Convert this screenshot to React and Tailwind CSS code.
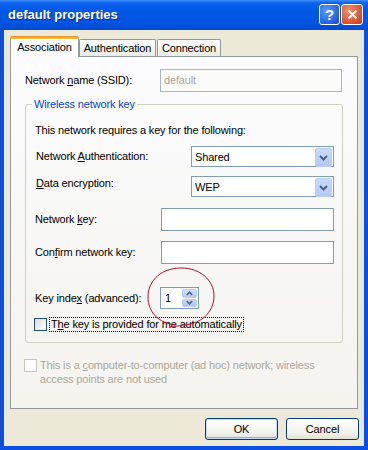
import React from "react";

const U = ({ children }) => (
  <span className="underline underline-offset-[1px] decoration-[1px]">{children}</span>
);

function DropBtn() {
  return (
    <div className="w-[17px] h-[19px] my-[1px] mr-[1px] rounded-[2px] border border-[#b8cdf8] bg-[linear-gradient(to_bottom,#c9dafc,#b2c8f7)] flex items-center justify-center">
      <svg width="9" height="6" viewBox="0 0 9 6">
        <path d="M1 1 L4.5 4.5 L8 1" fill="none" stroke="#4d6185" strokeWidth="2" />
      </svg>
    </div>
  );
}

function Select({ value }) {
  return (
    <div className="w-[143px] h-[21px] border border-[#7f9db9] bg-white flex items-stretch">
      <div className="flex-1 flex items-center pl-[3px] pt-[1px]">{value}</div>
      <DropBtn />
    </div>
  );
}

function TextBox({ w, children, disabled }) {
  return (
    <div
      className={
        "h-[23px] border flex items-center pl-[3px] " +
        (disabled ? "border-[#a9b8c8] text-[#aca899] bg-[#fbfbf9]" : "border-[#7f9db9] bg-white")
      }
      style={{ width: w }}
    >
      {children}
    </div>
  );
}

function Checkbox({ disabled }) {
  return (
    <div
      className={
        "w-[13px] h-[13px] shrink-0 border " +
        (disabled
          ? "border-[#cac8bb] bg-white"
          : "border-[#1c5180] bg-[linear-gradient(135deg,#dcdcd7,#ffffff)]")
      }
    />
  );
}

export default function App() {
  return (
    <div className="relative w-[368px] h-[450px] flex flex-col bg-[#0a4fe2] font-['Liberation_Sans',Arial,sans-serif] text-[11px] leading-[13px] tracking-[-0.15px] text-black overflow-hidden">
      {/* Title bar */}
      <div className="h-[30px] shrink-0 flex items-center pl-[8px] pr-[5px] bg-[linear-gradient(to_bottom,#3d8ff6_0%,#0a62ec_10%,#0058e6_35%,#0055e2_75%,#0049cf_100%)]">
        <div className="flex-1 text-white font-bold text-[13px] leading-[16px] tracking-normal [text-shadow:1px_1px_#0c2a8c]">
          default properties
        </div>
        <div className="flex gap-[1px] -mt-[1px]">
          <div className="w-[21px] h-[21px] rounded-[3px] border border-white bg-[radial-gradient(circle_at_35%_30%,#5d9cfb,#2560e0_70%,#1b4fc8)] flex items-center justify-center text-white font-bold text-[15px] leading-none tracking-normal">
            ?
          </div>
          <div className="w-[22px] h-[21px] rounded-[3px] border border-white bg-[radial-gradient(circle_at_35%_30%,#f0906b,#d9502a_70%,#c43f1b)] flex items-center justify-center">
            <svg width="11" height="11" viewBox="0 0 11 11">
              <path d="M1.5 1.5 L9.5 9.5 M9.5 1.5 L1.5 9.5" stroke="white" strokeWidth="2" />
            </svg>
          </div>
        </div>
      </div>

      {/* Window body */}
      <div className="flex-1 mx-[4px] mb-[4px] bg-[#ece9d8] flex flex-col">
        {/* Tabs */}
        <div className="flex items-end mt-[6px] ml-[6px]">
          <div className="relative z-10 -mb-[1px] w-[69px] h-[21px] rounded-t-[3px] border border-b-0 border-[#919b9c] bg-[#fcfcfe] flex flex-col">
            <div className="h-[3px] -mx-[1px] -mt-[1px] rounded-t-[3px] bg-[linear-gradient(to_bottom,#e68b2c,#ffc73c)]" />
            <div className="flex-1 flex items-center justify-center pb-[2px]">Association</div>
          </div>
          <div className="w-[77px] h-[17px] rounded-t-[2px] border border-b-0 border-[#919b9c] bg-[linear-gradient(to_bottom,#ffffff,#ecebe6)] flex items-center justify-center">
            Authentication
          </div>
          <div className="ml-[1px] w-[64px] h-[17px] rounded-t-[2px] border border-b-0 border-[#919b9c] bg-[linear-gradient(to_bottom,#ffffff,#ecebe6)] flex items-center justify-center">
            Connection
          </div>
        </div>

        {/* Tab panel */}
        <div className="ml-[6px] w-[348px] h-[353px] border border-[#919b9c] bg-[linear-gradient(to_bottom,#fcfcfe,#f4f3ee)] flex flex-col">
          {/* SSID */}
          <div className="mt-[12px] flex items-center pl-[14px] pr-[15px]">
            <div className="flex-1">
              Network <U>n</U>ame (SSID):
            </div>
            <TextBox w={182} disabled>
              <span>default</span>
            </TextBox>
          </div>

          {/* Group box */}
          <fieldset className="mt-[6px] mx-[14px] h-[245px] border border-[#d0d0bf] rounded-[3px] flex flex-col">
            <legend className="ml-[6px] px-[2px] text-[#0046d5] leading-[13px]">
              Wireless network key
            </legend>
            <div className="mt-[13px] pl-[9px] h-[13px]">
              This network requires a key for the following:
            </div>

            <div className="mt-[9px] flex items-center pl-[10px] pr-[8px]">
              <div className="flex-1">
                Network <U>A</U>uthentication:
              </div>
              <Select value="Shared" />
            </div>
            <div className="mt-[9px] flex items-start pl-[10px] pr-[8px]">
              <div className="flex-1 pt-[1px]">
                <U>D</U>ata encryption:
              </div>
              <Select value="WEP" />
            </div>

            <div className="mt-[11px] flex items-center pl-[9px] pr-[8px]">
              <div className="flex-1">
                Network <U>k</U>ey:
              </div>
              <TextBox w={173} />
            </div>
            <div className="mt-[10px] flex items-center pl-[9px] pr-[8px]">
              <div className="flex-1">
                Con<U>f</U>irm network key:
              </div>
              <TextBox w={173} />
            </div>

            <div className="mt-[23px] flex items-center pl-[9px]">
              <div className="w-[125px]">
                Key inde<U>x</U> (advanced):
              </div>
              <div className="w-[39px] h-[22px] border border-[#7f9db9] bg-white flex items-stretch">
                <div className="flex-1 flex items-center pl-[4px] pt-[1px]">1</div>
                <div className="w-[15px] my-[1px] mr-[1px] flex flex-col gap-[1px]">
                  <div className="flex-1 rounded-[2px] border border-[#b8cdf8] bg-[linear-gradient(to_bottom,#d2e0fc,#b4c9f7)] flex items-center justify-center">
                    <svg width="7" height="5" viewBox="0 0 7 5">
                      <path d="M0.8 4 L3.5 1.2 L6.2 4" fill="none" stroke="#4d6185" strokeWidth="1.6" />
                    </svg>
                  </div>
                  <div className="flex-1 rounded-[2px] border border-[#b8cdf8] bg-[linear-gradient(to_bottom,#c6d7fb,#b0c6f6)] flex items-center justify-center">
                    <svg width="7" height="5" viewBox="0 0 7 5">
                      <path d="M0.8 1 L3.5 3.8 L6.2 1" fill="none" stroke="#4d6185" strokeWidth="1.6" />
                    </svg>
                  </div>
                </div>
              </div>
            </div>

            <div className="mt-[8px] flex items-center pl-[8px] gap-[2px]">
              <Checkbox />
              <div className="border border-dotted border-black px-[1px] h-[15px] flex items-center">
                T<U>h</U>e key is provided for me automatically
              </div>
            </div>
          </fieldset>

          {/* Ad hoc */}
          <div className="mt-[16px] ml-[13px] flex items-start gap-[3px] text-[#aca899]">
            <Checkbox disabled />
            <div className="-mt-[1px] leading-[14px]">
              This is a <U>c</U>omputer-to-computer (ad hoc) network; wireless
              <br />
              access points are not used
            </div>
          </div>
        </div>

        {/* Buttons */}
        <div className="mt-[9px] flex justify-end gap-[8px] mr-[5px]">
          <div className="w-[73px] h-[22px] rounded-[3px] border border-[#003c74] bg-[linear-gradient(to_bottom,#ffffff,#f2f1ea_70%,#e3e1d6)] shadow-[inset_0_0_0_1px_#c6dafb,inset_0_-1px_0_1px_#92adec] flex items-center justify-center">
            OK
          </div>
          <div className="w-[73px] h-[22px] rounded-[3px] border border-[#003c74] bg-[linear-gradient(to_bottom,#ffffff,#f2f1ea_70%,#e3e1d6)] flex items-center justify-center">
            Cancel
          </div>
        </div>
      </div>

      {/* Red annotation circle */}
      <svg className="absolute left-[140px] top-[262px]" width="90" height="70" viewBox="0 0 90 70">
        <path
          d="M36 63 C18 61 8 50 8 35 C8 18 22 6 41 6 C60 6 74 18 74 34 C74 51 60 62 44 63 C40 64 35 64 30 65"
          fill="none"
          stroke="#b3122a"
          strokeWidth="1"
        />
      </svg>
    </div>
  );
}
